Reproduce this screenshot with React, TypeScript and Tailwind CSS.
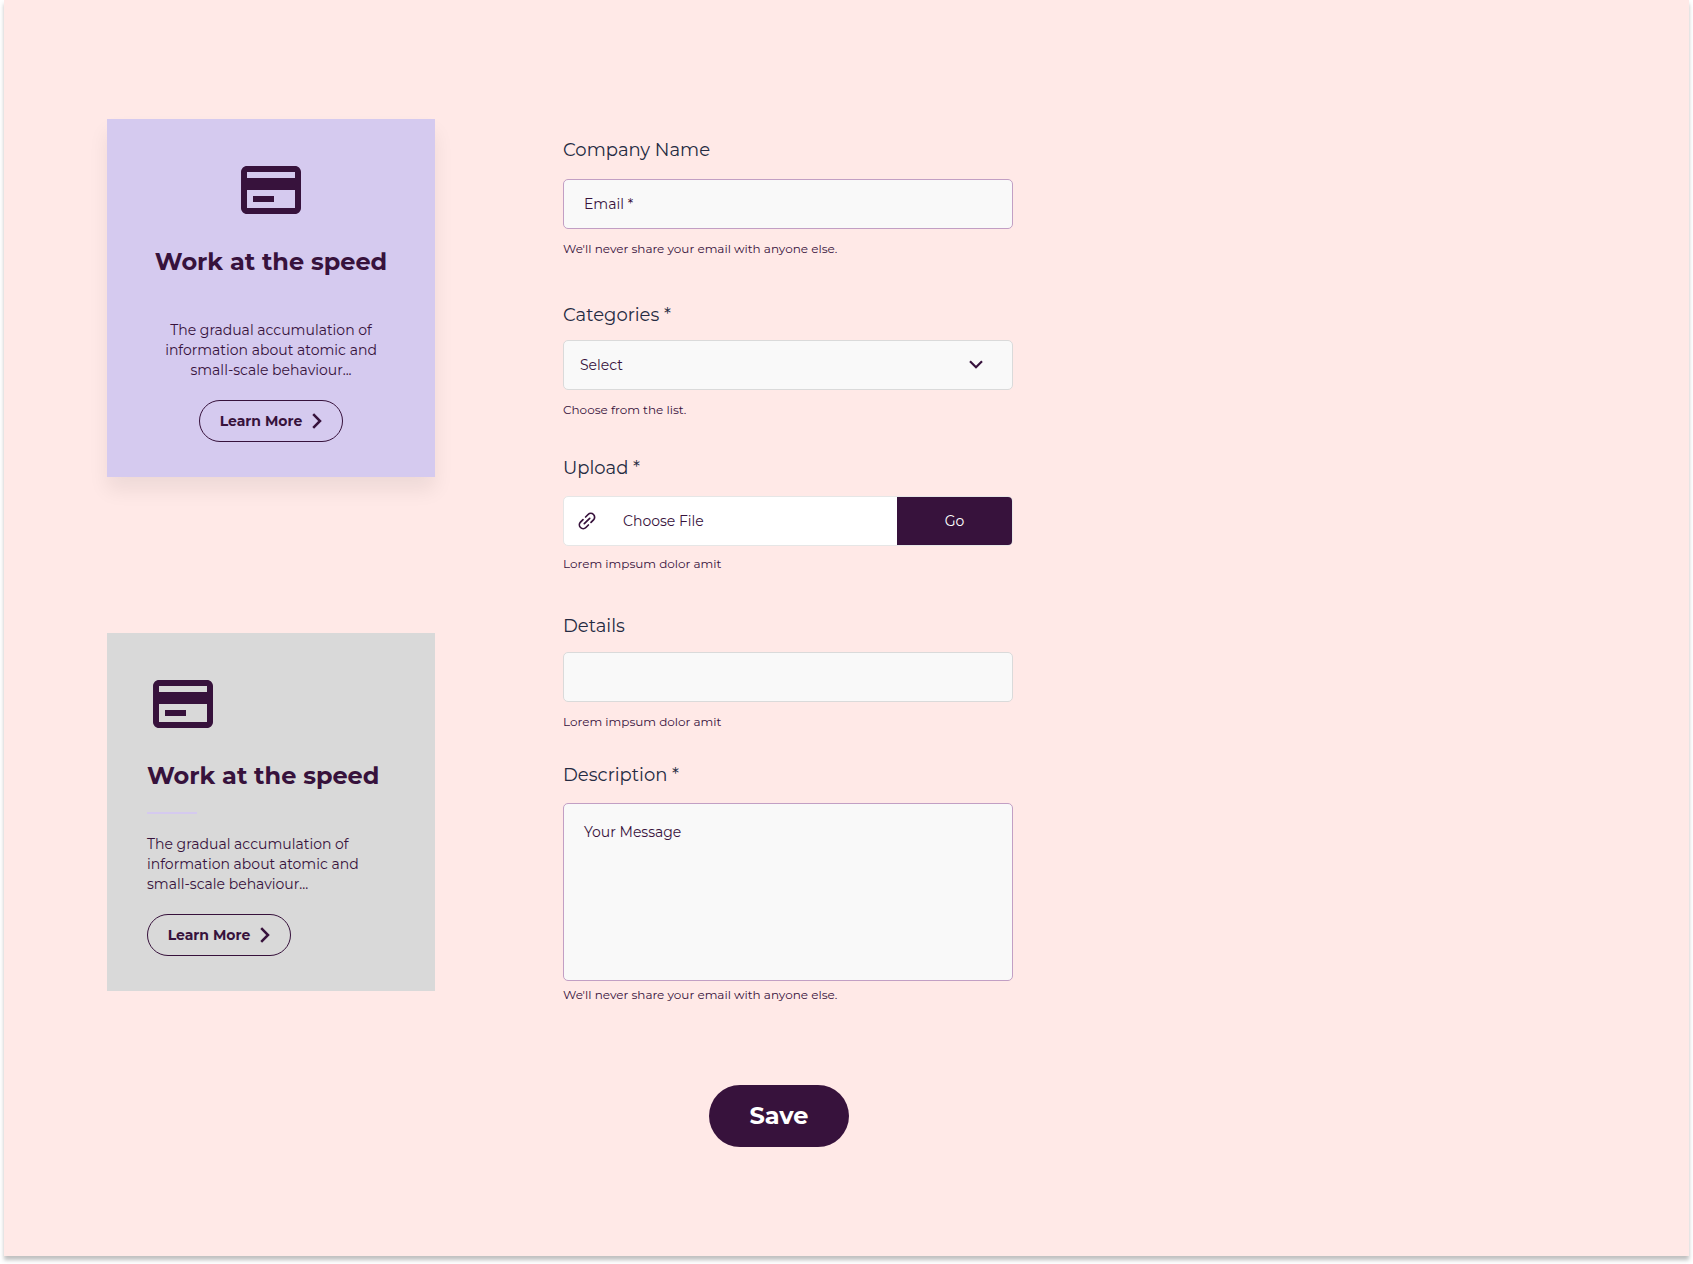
import type { ReactNode } from "react";

function CreditCardIcon() {
  return (
    <svg viewBox="0 0 24 24" className="size-[72px] shrink-0" fill="currentColor" aria-hidden="true">
      <path d="M20 4H4c-1.11 0-1.99.89-1.99 2L2 18c0 1.11.89 2 2 2h16c1.11 0 2-.89 2-2V6c0-1.11-.89-2-2-2zm0 14H4v-6h16v6zm0-10H4V6h16v2zM6 14h7v2H6z" />
    </svg>
  );
}

function ChevronRight() {
  return (
    <svg viewBox="0 0 10 16" className="h-4 w-2.5" fill="none" stroke="currentColor" strokeWidth="2.5" aria-hidden="true">
      <path d="M1.200 1.200 8 8 1.200 14.800" />
    </svg>
  );
}

function LinkIcon() {
  return (
    <svg viewBox="0 0 18 18" className="size-[18px]" fill="none" stroke="currentColor" strokeWidth="1.7" strokeLinecap="round" aria-hidden="true">
      <path d="M6.300 11.700l5.400-5.400" />
      <path d="M7.600 5l2.500-2.500a3.800 3.800 0 0 1 5.400 5.400L13 10.400" />
      <path d="M10.400 13l-2.500 2.500a3.800 3.800 0 0 1-5.400-5.400L5 7.600" />
    </svg>
  );
}

function FeatureCard({ centered = false }: { centered?: boolean }) {
  return (
    <article
      className={
        centered
          ? "flex flex-col items-center gap-5 bg-[#d5caef] px-10 py-[35px] text-center shadow-[0_13px_19px_rgba(0,0,0,0.07)]"
          : "flex flex-col items-start gap-5 bg-[#d9d9d9] px-10 py-[35px]"
      }
    >
      <CreditCardIcon />
      <h2 className="text-2xl leading-8 font-bold whitespace-nowrap">Work at the speed</h2>
      <div className="h-0.5 w-[50px] bg-[#d5caef]" />
      <p className="text-sm leading-5">
        The gradual accumulation of
        <br />
        information about atomic and
        <br />
        small-scale behaviour...
      </p>
      <button
        type="button"
        className="flex h-[42px] w-36 items-center justify-center gap-2.5 rounded-full border border-[#37123c] text-sm font-bold whitespace-nowrap"
      >
        Learn More
        <ChevronRight />
      </button>
    </article>
  );
}

function Label({ htmlFor, children }: { htmlFor: string; children: ReactNode }) {
  return (
    <label htmlFor={htmlFor} className="block text-lg leading-7 text-[#252b42]">
      {children}
    </label>
  );
}

function Help({ children }: { children: ReactNode }) {
  return <p className="text-xs leading-5">{children}</p>;
}

export default function App() {
  return (
    <div className="bg-white px-1 pb-2 font-['Montserrat','Inter',sans-serif] text-[#37123c]">
      <main className="flex gap-32 bg-[#ffe9e7] pt-[119px] pr-8 pb-[109px] pl-[103px] shadow-[0_4px_4px_rgba(0,0,0,0.25)]">
        <section className="flex w-[328px] shrink-0 flex-col gap-[156px]">
          <FeatureCard centered />
          <FeatureCard />
        </section>

        <form className="max-w-[450px] flex-1 pt-[17px]" onSubmit={(e) => e.preventDefault()}>
          <div className="mb-[42px]">
            <Label htmlFor="company">Company Name</Label>
            <input
              id="company"
              type="text"
              placeholder="Email *"
              className="mt-[15px] mb-2.5 block h-[50px] w-full rounded-[5px] border border-[#c29fc4] bg-[#f9f9f9] px-5 text-sm placeholder:text-[#37123c] placeholder:opacity-100"
            />
            <Help>We'll never share your email with anyone else.</Help>
          </div>

          <div className="mb-[34px]">
            <Label htmlFor="categories">Categories *</Label>
            <div className="relative mt-[11px] mb-2.5">
              <select
                id="categories"
                className="block h-[50px] w-full appearance-none rounded-[5px] border border-[#dadada] bg-[#f9f9f9] px-4 text-sm"
              >
                <option>Select</option>
              </select>
              <svg
                viewBox="0 0 14 9"
                className="pointer-events-none absolute top-5 right-[30px] h-[9px] w-3.5"
                fill="none"
                stroke="currentColor"
                strokeWidth="2.2"
                aria-hidden="true"
              >
                <path d="M1 1.200 7 7.200l6-6" />
              </svg>
            </div>
            <Help>Choose from the list.</Help>
          </div>

          <div className="mb-[38px]">
            <Label htmlFor="upload">Upload *</Label>
            <div className="mt-3.5 mb-2 flex h-[50px] overflow-hidden rounded-[5px] border border-[#e6e6e6] bg-white">
              <label htmlFor="upload" className="flex flex-1 items-center gap-[27px] pl-3.5 text-sm">
                <LinkIcon />
                Choose File
                <input id="upload" type="file" className="sr-only" />
              </label>
              <button type="button" className="w-[115px] bg-[#37123c] text-sm text-white">
                Go
              </button>
            </div>
            <Help>Lorem impsum dolor amit</Help>
          </div>

          <div className="mb-[29px]">
            <Label htmlFor="details">Details</Label>
            <input
              id="details"
              type="text"
              className="mt-3 mb-2.5 block h-[50px] w-full rounded-[5px] border border-[#dadada] bg-[#f9f9f9] px-5 text-sm"
            />
            <Help>Lorem impsum dolor amit</Help>
          </div>

          <div>
            <Label htmlFor="description">Description *</Label>
            <textarea
              id="description"
              placeholder="Your Message"
              className="mt-3.5 mb-1 block h-[178px] w-full resize-none rounded-[5px] border border-[#c29fc4] bg-[#f9f9f9] px-5 py-[18px] text-sm leading-5 placeholder:text-[#37123c] placeholder:opacity-100"
            />
            <Help>We'll never share your email with anyone else.</Help>
          </div>

          <button
            type="submit"
            className="mt-20 ml-[146px] block h-[62px] w-[140px] rounded-full bg-[#37123c] text-2xl font-bold text-white"
          >
            Save
          </button>
        </form>
      </main>
    </div>
  );
}
